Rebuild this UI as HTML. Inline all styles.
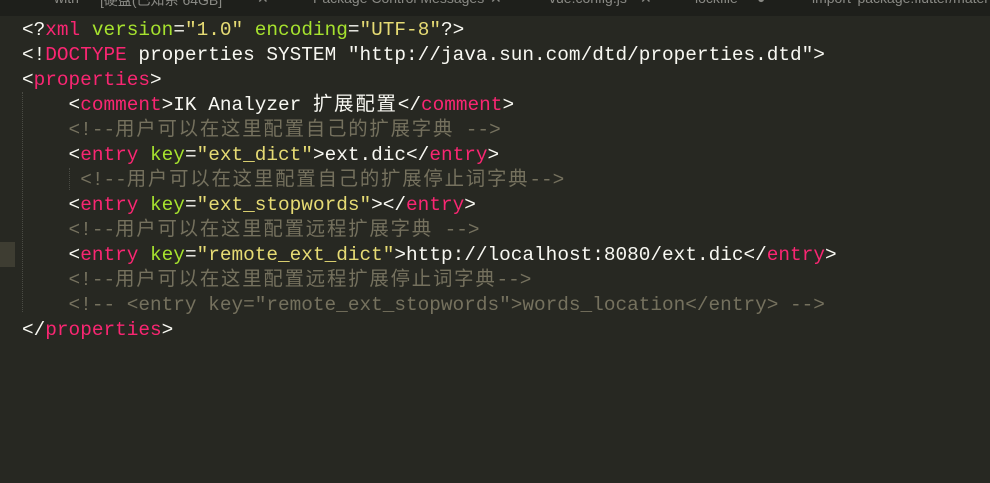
<!DOCTYPE html>
<html><head><meta charset="utf-8"><style>
html,body{margin:0;padding:0;width:990px;height:483px;overflow:hidden;background:#272822;}
.tabs{position:absolute;left:0;top:0;width:990px;height:16px;background:#1e1f1b;overflow:hidden;}
.tab{position:absolute;top:-10px;font:14px "Liberation Sans","Noto Sans CJK SC",sans-serif;color:#8a8a85;white-space:nowrap;}
.code{position:absolute;left:22px;top:18px;font:19.4px/25px "Liberation Mono","Noto Sans CJK SC",monospace;color:#f8f8f2;white-space:pre;}
.code i{font-style:normal;letter-spacing:1.8px;}
.t{color:#f92672}.a{color:#a6e22e}.s{color:#e6db74}.c{color:#75715e}
.guide{position:absolute;left:22px;top:92px;width:0;height:220px;border-left:1px dotted #4a4b44;}
.guide2{position:absolute;left:69px;top:168px;height:22px;border-left:1px dotted #4a4b44;}
.mark{position:absolute;left:0;top:242px;width:15px;height:25px;background:#3e3d32;}
</style></head><body>
<div class="tabs">
<span class="tab" style="left:54px">with</span>
<span class="tab" style="left:100px">[硬盘(已知系 64GB]</span>
<span class="tab" style="left:257px">✕</span>
<span class="tab" style="left:313px">Package Control Messages</span>
<span class="tab" style="left:490px">✕</span>
<span class="tab" style="left:549px">vue.config.js</span>
<span class="tab" style="left:640px">✕</span>
<span class="tab" style="left:695px">lockfile</span>
<span class="tab" style="left:757px">●</span>
<span class="tab" style="left:812px">import 'package:flutter/mater</span>
</div>
<div class="mark"></div>
<div class="guide"></div><div class="guide2"></div>
<div class="code">&lt;?<span class="t">xml</span> <span class="a">version</span>=<span class="s">"1.0"</span> <span class="a">encoding</span>=<span class="s">"UTF-8"</span>?&gt;
&lt;!<span class="t">DOCTYPE</span> properties SYSTEM "http://java.sun.com/dtd/properties.dtd"&gt;
&lt;<span class="t">properties</span>&gt;
    &lt;<span class="t">comment</span>&gt;IK Analyzer <i>扩展配置</i>&lt;/<span class="t">comment</span>&gt;
    <span class="c">&lt;!--<i>用户可以在这里配置自己的扩展字典</i> --&gt;</span>
    &lt;<span class="t">entry</span> <span class="a">key</span>=<span class="s">"ext_dict"</span>&gt;ext.dic&lt;/<span class="t">entry</span>&gt;
     <span class="c">&lt;!--<i>用户可以在这里配置自己的扩展停止词字典</i>--&gt;</span>
    &lt;<span class="t">entry</span> <span class="a">key</span>=<span class="s">"ext_stopwords"</span>&gt;&lt;/<span class="t">entry</span>&gt;
    <span class="c">&lt;!--<i>用户可以在这里配置远程扩展字典</i> --&gt;</span>
    &lt;<span class="t">entry</span> <span class="a">key</span>=<span class="s">"remote_ext_dict"</span>&gt;http://localhost:8080/ext.dic&lt;/<span class="t">entry</span>&gt;
    <span class="c">&lt;!--<i>用户可以在这里配置远程扩展停止词字典</i>--&gt;</span>
    <span class="c">&lt;!-- &lt;entry key="remote_ext_stopwords"&gt;words_location&lt;/entry&gt; --&gt;</span>
&lt;/<span class="t">properties</span>&gt;</div>
</body></html>
